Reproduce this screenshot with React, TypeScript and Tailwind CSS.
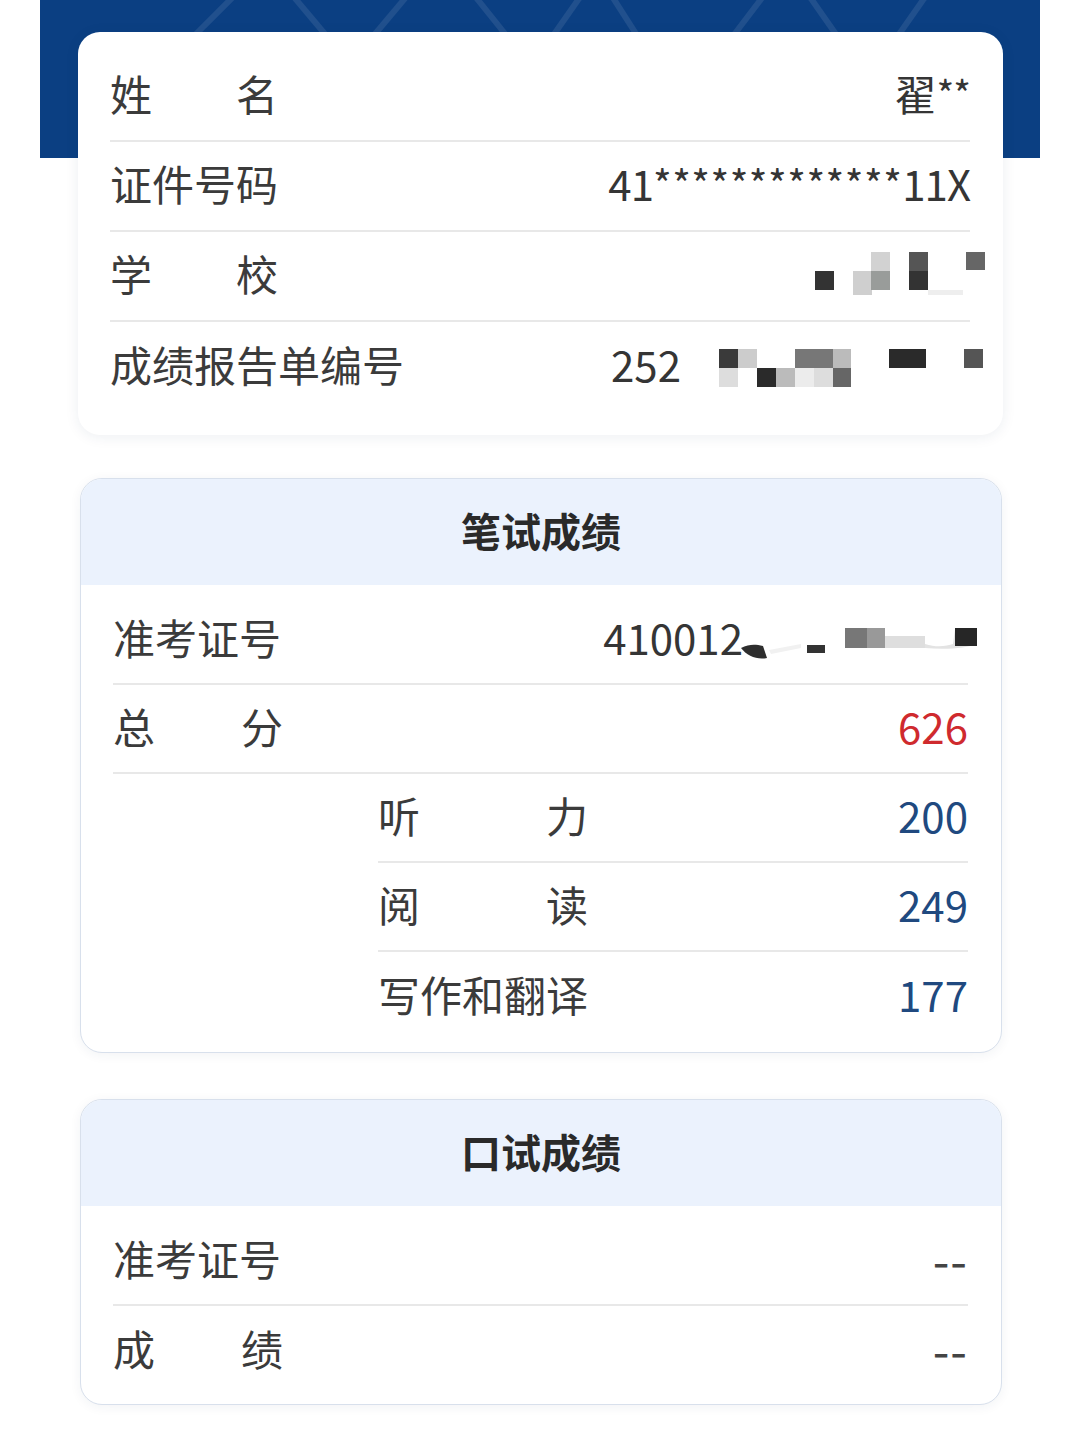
import type { ReactNode } from 'react'

const FONT = "font-['Noto_Sans_CJK_SC','Noto_Sans',sans-serif]"

type Cell = [number, number, number, number, string]

// mosaic blocks covering private info
const schoolCells: Cell[] = [
  [7, 21, 19, 19, '#333333'],
  [45, 21, 19, 24, '#cfcfcf'],
  [63, 2, 19, 19, '#d2d2d2'],
  [63, 21, 19, 19, '#999c9a'],
  [101, 2, 19, 19, '#555555'],
  [101, 21, 19, 19, '#333333'],
  [158, 2, 19, 18, '#666666'],
  [120, 40, 35, 5, '#eeeeee'],
]

const reportCells: Cell[] = [
  [0, 1, 19, 19, '#3a3a3a'],
  [19, 1, 19, 19, '#cccccc'],
  [76, 1, 38, 19, '#777777'],
  [114, 1, 18, 19, '#bbbbbb'],
  [170, 1, 37, 19, '#2a2a2a'],
  [245, 1, 19, 19, '#555555'],
  [0, 20, 19, 19, '#dddddd'],
  [38, 20, 19, 19, '#2a2a2a'],
  [57, 20, 19, 19, '#bbbbbb'],
  [76, 20, 19, 19, '#ececec'],
  [95, 20, 19, 19, '#dddddd'],
  [114, 20, 18, 19, '#666666'],
]

function Mosaic({ cells, w, h }: { cells: Cell[]; w: number; h: number }) {
  return (
    <svg width={w} height={h} viewBox={`0 0 ${w} ${h}`} className="block">
      {cells.map(([x, y, cw, ch, c], i) => (
        <rect key={i} x={x} y={y} width={cw} height={ch} fill={c} />
      ))}
    </svg>
  )
}

function AdmitSmudge() {
  return (
    <svg width={240} height={50} viewBox="0 0 240 50" className="block">
      <path d="M0 34 C8 30 14 30 22 32 L26 44 C16 46 6 42 0 34 Z" fill="#2e2e2e" />
      <path d="M28 36 L60 30 L60 34 L30 40 Z" fill="#f1f1f1" />
      <rect x="66" y="31" width="18" height="8" fill="#333333" />
      <rect x="104" y="14" width="22" height="20" fill="#777777" />
      <rect x="126" y="14" width="18" height="20" fill="#999999" />
      <rect x="144" y="22" width="40" height="12" fill="#dedede" />
      <path d="M184 30 C196 34 206 32 212 30 L214 15 L236 15 L236 30 C226 34 206 36 184 34 Z" fill="#e3e3e3" />
      <rect x="214" y="14" width="22" height="18" fill="#262626" />
    </svg>
  )
}

function Label({ chars, width }: { chars: string[]; width: number }) {
  return (
    <div className="flex justify-between" style={{ width }}>
      {chars.map((c, i) => (
        <span key={i}>{c}</span>
      ))}
    </div>
  )
}

function Row({ label, children, last = false, h = 'h-[90px]' }: { label: ReactNode; children?: ReactNode; last?: boolean; h?: string }) {
  return (
    <div
      className={`flex items-center justify-between pb-[6px] ${h} ${last ? '' : 'border-b-2 border-[#e8e8e8]'}`}
    >
      <div className="text-[42px] leading-none text-[#3b3b3b]">{label}</div>
      <div className="flex items-center text-[42px] leading-none text-[#353535]">{children}</div>
    </div>
  )
}

function HeaderLines() {
  return (
    <svg width="1000" height="158" viewBox="0 0 1000 158" className="block">
      <g stroke="#ffffff" strokeOpacity="0.09" strokeWidth="6" fill="none">
        <path d="M150 40 L200 -10" />
        <path d="M248 -10 L290 40" />
        <path d="M330 40 L372 -10" />
        <path d="M430 -10 L470 40" />
        <path d="M510 40 L545 -10" />
        <path d="M568 -10 L600 40" />
        <path d="M690 40 L728 -10" />
        <path d="M765 -10 L800 40" />
        <path d="M855 40 L890 -10" />
      </g>
    </svg>
  )
}

export default function App() {
  return (
    <div className={`w-[1080px] h-[1440px] bg-white overflow-hidden ${FONT}`}>
      <div className="mx-[40px] h-[158px] bg-[#0b3f82] overflow-hidden">
        <HeaderLines />
      </div>

      {/* basic info */}
      <div className="relative -mt-[126px] ml-[78px] w-[925px] rounded-[22px] bg-white pt-[20px] pb-[23px] pl-[32px] pr-[33px] shadow-[0_2px_14px_rgba(30,50,90,0.08)]">
        <Row label={<Label chars={['姓', '名']} width={168} />}>
          <span>翟</span>
          <span className="text-[38px] tracking-[-1px]">**</span>
        </Row>
        <Row label="证件号码">
          <span className="tracking-[-1px]">41</span>
          <span className="text-[40px] tracking-[0.5px]">*************</span>
          <span className="tracking-[-1px]">11X</span>
        </Row>
        <Row label={<Label chars={['学', '校']} width={168} />}>
          <div className="translate-x-[15px]">
            <Mosaic cells={schoolCells} w={177} h={46} />
          </div>
        </Row>
        <Row label="成绩报告单编号" last>
          <span>252</span>
          <div className="ml-[38px] mr-[-13px] translate-y-[4px]">
            <Mosaic cells={reportCells} w={264} h={40} />
          </div>
        </Row>
      </div>

      {/* written test */}
      <div className="mt-[43px] ml-[80px] w-[922px] rounded-[22px] border border-[#d8e0ec] bg-white overflow-hidden shadow-[0_2px_12px_rgba(30,50,90,0.06)]">
        <div className="h-[106px] bg-[#ebf2fd] flex items-center justify-center pb-[4px] text-[40px] font-bold text-[#2a2a2a]">
          笔试成绩
        </div>
        <div className="pt-[11px] pb-[11px] pl-[32px] pr-[33px]">
          <Row label="准考证号" h="h-[89px]">
            <span>410012</span>
            <div className="-ml-[2px] mr-[-13px] translate-y-[2px]">
              <AdmitSmudge />
            </div>
          </Row>
          <Row label={<Label chars={['总', '分']} width={170} />} h="h-[89px]">
            <span className="text-[#cf2a2e]">626</span>
          </Row>
          <div className="ml-[265px]">
            <Row label={<Label chars={['听', '力']} width={210} />} h="h-[89px]">
              <span className="text-[#20497f]">200</span>
            </Row>
            <Row label={<Label chars={['阅', '读']} width={210} />} h="h-[89px]">
              <span className="text-[#20497f]">249</span>
            </Row>
            <Row label="写作和翻译" h="h-[89px]" last>
              <span className="text-[#20497f]">177</span>
            </Row>
          </div>
        </div>
      </div>

      {/* oral test */}
      <div className="mt-[46px] ml-[80px] w-[922px] rounded-[22px] border border-[#d8e0ec] bg-white overflow-hidden shadow-[0_2px_12px_rgba(30,50,90,0.06)]">
        <div className="h-[106px] bg-[#ebf2fd] flex items-center justify-center pb-[4px] text-[40px] font-bold text-[#2a2a2a]">
          口试成绩
        </div>
        <div className="pt-[11px] pb-[9px] pl-[32px] pr-[33px]">
          <Row label="准考证号" h="h-[89px]">
            <span className="text-[48px] tracking-[1px] text-[#444]">--</span>
          </Row>
          <Row label={<Label chars={['成', '绩']} width={170} />} h="h-[89px]" last>
            <span className="text-[48px] tracking-[1px] text-[#444]">--</span>
          </Row>
        </div>
      </div>
    </div>
  )
}
